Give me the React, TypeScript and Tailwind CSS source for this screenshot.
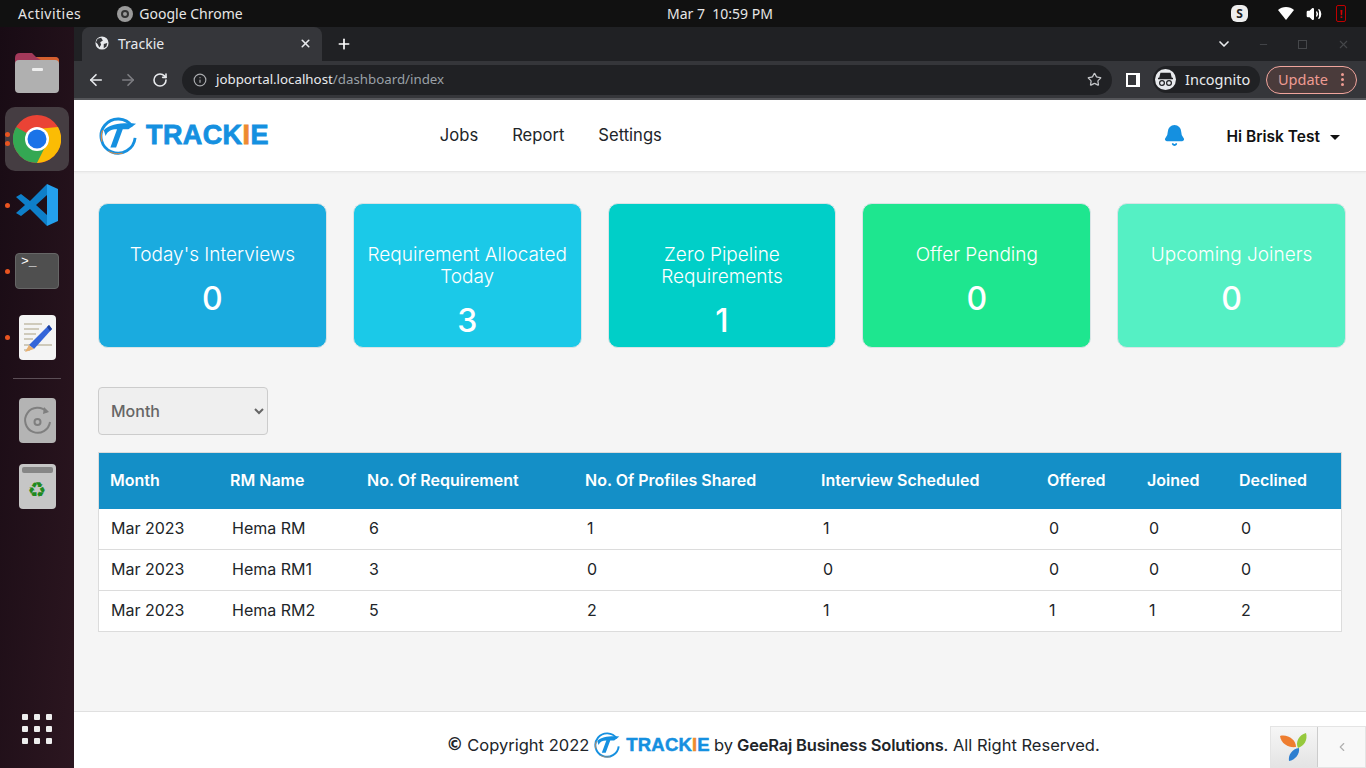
import React from 'react';
import { ArrowLeft, ArrowRight, RotateCw, Info, Star, ChevronDown, Plus, X, Minus, Bell, ChevronLeft, Volume2 } from 'lucide-react';

const cards = [
  { title: ["Today's Interviews"], value: '0', bg: 'bg-[#1aabdf]' },
  { title: ['Requirement Allocated', 'Today'], value: '3', bg: 'bg-[#1bc9e8]' },
  { title: ['Zero Pipeline', 'Requirements'], value: '1', bg: 'bg-[#00cfc8]' },
  { title: ['Offer Pending'], value: '0', bg: 'bg-[#1ee68f]' },
  { title: ['Upcoming Joiners'], value: '0', bg: 'bg-[#55f0c4]' },
];

const rows = [
  ['Mar 2023', 'Hema RM', '6', '1', '1', '0', '0', '0'],
  ['Mar 2023', 'Hema RM1', '3', '0', '0', '0', '0', '0'],
  ['Mar 2023', 'Hema RM2', '5', '2', '1', '1', '1', '2'],
];

const headers = ['Month', 'RM Name', 'No. Of Requirement', 'No. Of Profiles Shared', 'Interview Scheduled', 'Offered', 'Joined', 'Declined'];
const colWidths = ['w-[120px]', 'w-[137px]', 'w-[218px]', 'w-[236px]', 'w-[226px]', 'w-[100px]', 'w-[92px]', 'w-[113px]'];

const LogoMark = ({ size }: { size: number }) => (
  <svg width={size} height={size} viewBox="0 0 40 40" fill="none">
    <path d="M35 10 A18 18 0 1 0 38 22" stroke="#1590e0" strokeWidth="3" />
    <path d="M5 14 C11 7 26 6 39 7 L31 13 L25 13 L18 32 L12 32 L19 13 C13 13 9 15 7 20 Z" fill="#1590e0" />
    <path d="M3 26 C2 21 2 17 4 14" stroke="#e98a3c" strokeWidth="1.2" />
    <path d="M10 36 C15 39 20 39 25 38" stroke="#e98a3c" strokeWidth="1" />
  </svg>
);

const Logo = ({ large }: { large?: boolean }) => (
  <span
    className={
      large
        ? "font-['Liberation_Sans'] font-bold text-[27px] leading-none text-[#1590e0] tracking-[0.4px] [-webkit-text-stroke:0.8px_#1590e0]"
        : "font-['Liberation_Sans'] font-bold text-[18.5px] leading-none text-[#1590e0] tracking-[0.2px] [-webkit-text-stroke:0.5px_#1590e0]"
    }
  >
    TRACK
    <span className={large ? 'text-[#ee8a2f] [-webkit-text-stroke:0.8px_#ee8a2f]' : 'text-[#ee8a2f] [-webkit-text-stroke:0.5px_#ee8a2f]'}>I</span>E
  </span>
);

const DockItem = ({ children, dots = 0, active }: { children: React.ReactNode; dots?: number; active?: boolean }) => (
  <div className="relative h-[66px] flex items-center justify-center">
    {active && <div className="absolute left-[5px] top-px w-[64px] h-[64px] rounded-[10px] bg-[#453d42]" />}
    <div className="relative">{children}</div>
    {dots > 0 && (
      <div className="absolute left-[5px] top-0 bottom-0 flex flex-col justify-center gap-[4px]">
        {Array.from({ length: dots }).map((_, i) => (
          <div key={i} className="w-[5px] h-[5px] rounded-full bg-[#e95420]" />
        ))}
      </div>
    )}
  </div>
);

const Dock = () => (
  <div className="w-[74px] shrink-0 flex flex-col pt-[13px] bg-gradient-to-br from-[#180b14] to-[#2c1620]">
    <DockItem>
      <svg width="46" height="42" viewBox="0 0 46 42">
        <path d="M1 6 Q1 1 6 1 L18 1 L22 5 L41 5 Q45 5 45 9 L45 20 L1 20 Z" fill="#a3395a" />
        <path d="M22 5 L41 5 Q45 5 45 9 L45 14 L30 10 Z" fill="#d4602f" />
        <rect x="1" y="8" width="44" height="33" rx="4" fill="#b0b0b0" />
        <rect x="18" y="16" width="11" height="3" rx="1" fill="#eeeeee" />
      </svg>
    </DockItem>
    <DockItem dots={2} active>
      <svg width="48" height="48" viewBox="0 0 48 48">
        <circle cx="24" cy="24" r="24" fill="#ea4335" />
        <path d="M24 24 L3.2 12 A24 24 0 0 0 24 48 L36 27 Z" fill="#34a853" />
        <path d="M24 14 L45 12 A24 24 0 0 1 24 48 L34 28 Z" fill="#fbbc04" />
        <circle cx="24" cy="24" r="12" fill="#ffffff" />
        <circle cx="24" cy="24" r="9.5" fill="#1a73e8" />
      </svg>
    </DockItem>
    <DockItem dots={1}>
      <svg width="44" height="44" viewBox="0 0 44 44">
        <path d="M32 1 L15 18 L6 11 L1 14 L10 22 L1 30 L6 33 L15 26 L32 43 L32 32 L21 22 L32 12 Z" fill="#0e7fc9" />
        <path d="M32 1 L43 6 L43 38 L32 43 Z" fill="#24a0ed" />
      </svg>
    </DockItem>
    <DockItem dots={1}>
      <div className="w-[44px] h-[36px] rounded-[4px] bg-[#4f4f4f] border border-[#666] flex items-start pl-[5px]">
        <span className="font-['Liberation_Mono'] text-[13px] leading-[15px] text-white">&gt;_</span>
      </div>
    </DockItem>
    <DockItem dots={1}>
      <svg width="37" height="45" viewBox="0 0 37 45">
        <rect x="0" y="0" width="37" height="45" rx="4" fill="#f4f4f4" />
        <path d="M5 9h18M5 14h15M5 19h12M5 24h9M5 30h28M5 35h6" stroke="#cfcabb" strokeWidth="2" />
        <path d="M30 10 L33 14 L15 34 L10 30 Z" fill="#3465d9" />
        <path d="M30 10 L33 14 L31 16 L28 12 Z" fill="#1d3f9c" />
        <path d="M10 30 L15 34 L6 37 Z" fill="#e8b070" />
      </svg>
    </DockItem>
    <div className="h-[17px] flex items-center justify-center">
      <div className="w-[48px] h-px bg-[#5b4e56]" />
    </div>
    <DockItem>
      <svg width="37" height="45" viewBox="0 0 37 45">
        <rect width="37" height="45" rx="4" fill="#b4b4b4" />
        <path d="M28 14 A12.5 12.5 0 1 0 31 24" stroke="#7f7f7f" strokeWidth="2" fill="none" />
        <path d="M25 9 L30 14 L24 16" fill="#7f7f7f" />
        <circle cx="18.5" cy="24" r="3" stroke="#7f7f7f" strokeWidth="2" fill="none" />
      </svg>
    </DockItem>
    <DockItem>
      <div className="w-[37px] h-[45px] rounded-[4px] bg-[#c6c6c6] flex flex-col items-center pt-[3px] px-[3px]">
        <div className="w-full h-[6px] rounded-[2px] bg-[#868686]" />
        <span className="text-[#1f8a1f] text-[21px] leading-[30px] font-['DejaVu_Sans'] mt-[2px]">♻</span>
      </div>
    </DockItem>
    <div className="mt-auto pb-[24px] flex justify-center">
      <div className="grid grid-cols-3 gap-[6px]">
        {Array.from({ length: 9 }).map((_, i) => (
          <div key={i} className="w-[6px] h-[6px] rounded-[1px] bg-[#eeeeee]" />
        ))}
      </div>
    </div>
  </div>
);

const TopBar = () => (
  <div className="h-[27px] bg-[#111111] flex items-center text-[14px] text-[#e6e6e6] font-['Noto_Sans'] relative shrink-0">
    <span className="ml-[18px] tracking-[0.5px]">Activities</span>
    <span className="ml-[36px] w-[16px] h-[16px] rounded-full bg-[#9a9a9a] flex items-center justify-center">
      <span className="w-[8px] h-[8px] rounded-full border-2 border-[#333]" />
    </span>
    <span className="ml-[6px]">Google Chrome</span>
    <span className="absolute left-[667px] text-[14px]">Mar 7&nbsp;&nbsp;10:59 PM</span>
    <div className="ml-auto flex items-center">
      <span className="w-[17px] h-[17px] rounded-[6px] bg-[#eeeeee] text-[#222] text-[12px] font-bold flex items-center justify-center mr-[30px]">S</span>
      <svg width="16" height="13" viewBox="0 0 16 13" className="mr-[12px]">
        <path d="M0 3 C4 -1 12 -1 16 3 L8 13 Z" fill="#ffffff" />
      </svg>
      <Volume2 size={16} className="text-white mr-[14px]" fill="white" />
      <span className="w-[10px] h-[17px] border border-[#c00000] rounded-[2px] text-[#d00000] text-[11px] leading-[15px] text-center font-bold mr-[20px]">!</span>
    </div>
  </div>
);

const Chrome = () => (
  <div className="shrink-0 font-['Noto_Sans']">
    <div className="h-[34px] bg-[#202124] flex items-end pl-[8px]">
      <div className="w-[240px] h-[34px] rounded-t-[8px] bg-[#35363a] flex items-center pl-[13px] pr-[10px] pb-[2px]">
        <svg width="14" height="14" viewBox="0 0 16 16">
          <circle cx="8" cy="8" r="7.5" fill="#e8eaed" />
          <path d="M3 3 L7 2 L9 5 L6 7 L7 10 L5 13 L3 9 L1 7 Z M10 9 L14 8 L13 12 L10 14 Z" fill="#35363a" />
        </svg>
        <span className="ml-[9px] text-[14px] text-[#e8eaed]">Trackie</span>
        <X size={13} strokeWidth={3} className="ml-auto text-[#e8eaed]" />
      </div>
      <Plus size={16} strokeWidth={2.5} className="ml-[14px] mb-[9px] text-white" />
      <div className="ml-auto flex items-center mb-[9px] pr-[16px]">
        <ChevronDown size={16} strokeWidth={2.5} className="text-[#e8eaed] mr-[26px]" />
        <Minus size={11} className="text-[#45474a] mr-[29px]" />
        <span className="w-[9px] h-[9px] border border-[#45474a] mr-[30px]" />
        <X size={13} className="text-[#45474a]" />
      </div>
    </div>
    <div className="h-[39px] bg-[#35363a] border-b-2 border-[#55565a] flex items-center pl-[13px]">
      <ArrowLeft size={18} strokeWidth={2.2} className="text-[#e8eaed]" />
      <ArrowRight size={18} strokeWidth={2.2} className="ml-[14px] text-[#7d7e82]" />
      <RotateCw size={16} strokeWidth={2.4} className="ml-[15px] text-[#e8eaed]" />
      <div className="ml-[14px] w-[930px] h-[30px] rounded-full bg-[#202124] flex items-center pl-[11px] pr-[10px] text-[13.3px]">
        <Info size={14} className="text-[#a9abae]" />
        <span className="ml-[9px] text-[#e8eaed]">jobportal.localhost</span>
        <span className="text-[#9aa0a6]">/dashboard/index</span>
        <Star size={15} className="ml-auto text-[#c4c6c9]" />
      </div>
      <div className="ml-[14px] w-[14px] h-[14px] bg-white">
        <div className="w-[8px] h-[10px] mt-[2px] ml-[2px] bg-[#35363a]" />
      </div>
      <div className="ml-[13px] w-[107px] h-[27px] rounded-full bg-[#202124] flex items-center text-[14.5px] text-[#e8eaed]">
        <span className="ml-[2px] w-[21px] h-[21px] rounded-full bg-[#e8eaed] flex items-center justify-center">
          <svg width="17" height="15" viewBox="0 0 17 15" fill="none">
            <path d="M4 1.5h9l1 4H3z M1 6.5h15" stroke="#202124" strokeWidth="1.4" fill="#202124" />
            <circle cx="5" cy="11" r="2.4" stroke="#202124" strokeWidth="1.2" />
            <circle cx="12" cy="11" r="2.4" stroke="#202124" strokeWidth="1.2" />
          </svg>
        </span>
        <span className="ml-[9px]">Incognito</span>
      </div>
      <div className="ml-[6px] w-[91px] h-[28px] rounded-full border border-[#f0a59d] bg-[#4a3b3b] flex items-center pl-[11px] text-[14.5px] text-[#ee9b93]">
        Update
        <span className="ml-[13px] flex flex-col gap-[2px]">
          <span className="w-[3px] h-[3px] rounded-full bg-[#ee9b93]" />
          <span className="w-[3px] h-[3px] rounded-full bg-[#ee9b93]" />
          <span className="w-[3px] h-[3px] rounded-full bg-[#ee9b93]" />
        </span>
      </div>
    </div>
  </div>
);

const Header = () => (
  <header className="h-[72px] shrink-0 bg-white border-b border-[#e6e6e6] shadow-[0_1px_2px_rgba(0,0,0,0.04)] flex items-center pl-[25px] pr-[26px]">
    <LogoMark size={38} />
    <span className="ml-[9px]">
      <Logo large />
    </span>
    <nav className="ml-[171px] flex gap-[34px] text-[16.6px] text-[#212529]">
      <a>Jobs</a>
      <a>Report</a>
      <a>Settings</a>
    </nav>
    <Bell size={23} className="ml-auto text-[#1590e0]" fill="#1590e0" />
    <span className="ml-[40px] mt-[3px] text-[15.5px] font-semibold text-[#111]">Hi Brisk Test</span>
    <span className="ml-[10px] mt-[3px] w-0 h-0 border-x-[5px] border-x-transparent border-t-[5px] border-t-[#111]" />
  </header>
);

const Footer = () => (
  <footer className="relative h-[57px] shrink-0 bg-white border-t border-[#e0e0e0] flex items-center justify-center pl-[106px] pt-[10px] text-[16.5px] text-[#212529]">
    <span className="font-['DejaVu_Sans'] font-bold text-[17px] mr-[4px]">©</span>
    <span>Copyright 2022</span>
    <span className="ml-[5px] mr-[6px] flex">
      <LogoMark size={26} />
    </span>
    <Logo />
    <span className="ml-[4px]">by</span>
    <span className="ml-[4px] font-semibold tracking-[-0.2px]">GeeRaj Business Solutions</span>
    <span>. All Right Reserved.</span>
    <div className="absolute right-0 bottom-0 w-[96px] h-[42px] flex border border-[#e4e4e4]">
      <div className="w-[47px] bg-gradient-to-b from-[#f6f6f6] to-[#e4e4e4] border-r border-[#ccc] flex items-center justify-center">
        <svg width="30" height="30" viewBox="0 0 30 30">
          <path d="M1 4 C9 2 17 8 17 15 C10 16 2 12 1 4 Z" fill="#ee7d2f" />
          <path d="M27 1 C29 8 25 14 19 16 C16 10 20 3 27 1 Z" fill="#96c93d" />
          <path d="M20 16 C21 22 16 28 10 29 C9 23 13 17 20 16 Z" fill="#2e7fd0" />
        </svg>
      </div>
      <div className="flex-1 bg-[#f8f8f8] flex items-center justify-center">
        <ChevronLeft size={14} className="text-[#b0b0b0]" />
      </div>
    </div>
  </footer>
);

const App: React.FC = () => {
  return (
    <div className="h-[768px] w-[1366px] overflow-hidden flex flex-col font-['Inter',sans-serif]">
      <TopBar />
      <div className="flex flex-1 min-h-0">
        <Dock />
        <div className="flex-1 min-w-0 flex flex-col bg-[#f5f5f5]">
          <Chrome />
          <Header />
          <main className="flex-1 min-h-0 pt-[31px] pl-[24px]">
            <div className="flex gap-[26px] w-[1248px]">
              {cards.map((card) => (
                <div
                  key={card.title[0]}
                  className={`${card.bg} flex-1 h-[145px] rounded-[10px] border border-[#d9e4e6] flex flex-col items-center pt-[40px] text-white text-center`}
                >
                  <div className="text-[19px] leading-[22px] font-light">
                    {card.title.map((line) => (
                      <div key={line}>{line}</div>
                    ))}
                  </div>
                  <div className="mt-[14px] text-[32px] leading-[38px] font-medium">{card.value}</div>
                </div>
              ))}
            </div>
            <select className="mt-[39px] block w-[170px] h-[48px] rounded-[4px] border border-[#cccccc] bg-[#efefef] pl-[8px] text-[16px] font-medium text-[#666666]">
              <option>Month</option>
            </select>
            <div className="mt-[17px] w-[1244px] border-x border-t border-[#dcdcdc]">
              <table className="w-full table-fixed border-separate border-spacing-0 bg-white">
                <colgroup>
                  {colWidths.map((w, i) => (
                    <col key={i} className={w} />
                  ))}
                </colgroup>
                <thead>
                  <tr className="h-[56px] text-white text-left">
                    {headers.map((h) => (
                      <th key={h} className="bg-[#148fc7] pl-[11px] pb-[2px] text-[16px] font-semibold whitespace-nowrap">{h}</th>
                    ))}
                  </tr>
                </thead>
                <tbody>
                  {rows.map((row) => (
                    <tr key={row[1]} className="h-[41px] text-[16px] text-[#212529]">
                      {row.map((cell, i) => (
                        <td key={i} className={`${i === 0 ? 'pl-[12px]' : 'pl-[13px]'} pb-[2px] border-b border-[#dcdcdc] whitespace-nowrap`}>{cell}</td>
                      ))}
                    </tr>
                  ))}
                </tbody>
              </table>
            </div>
          </main>
          <Footer />
        </div>
      </div>
    </div>
  );
};

export default App;
